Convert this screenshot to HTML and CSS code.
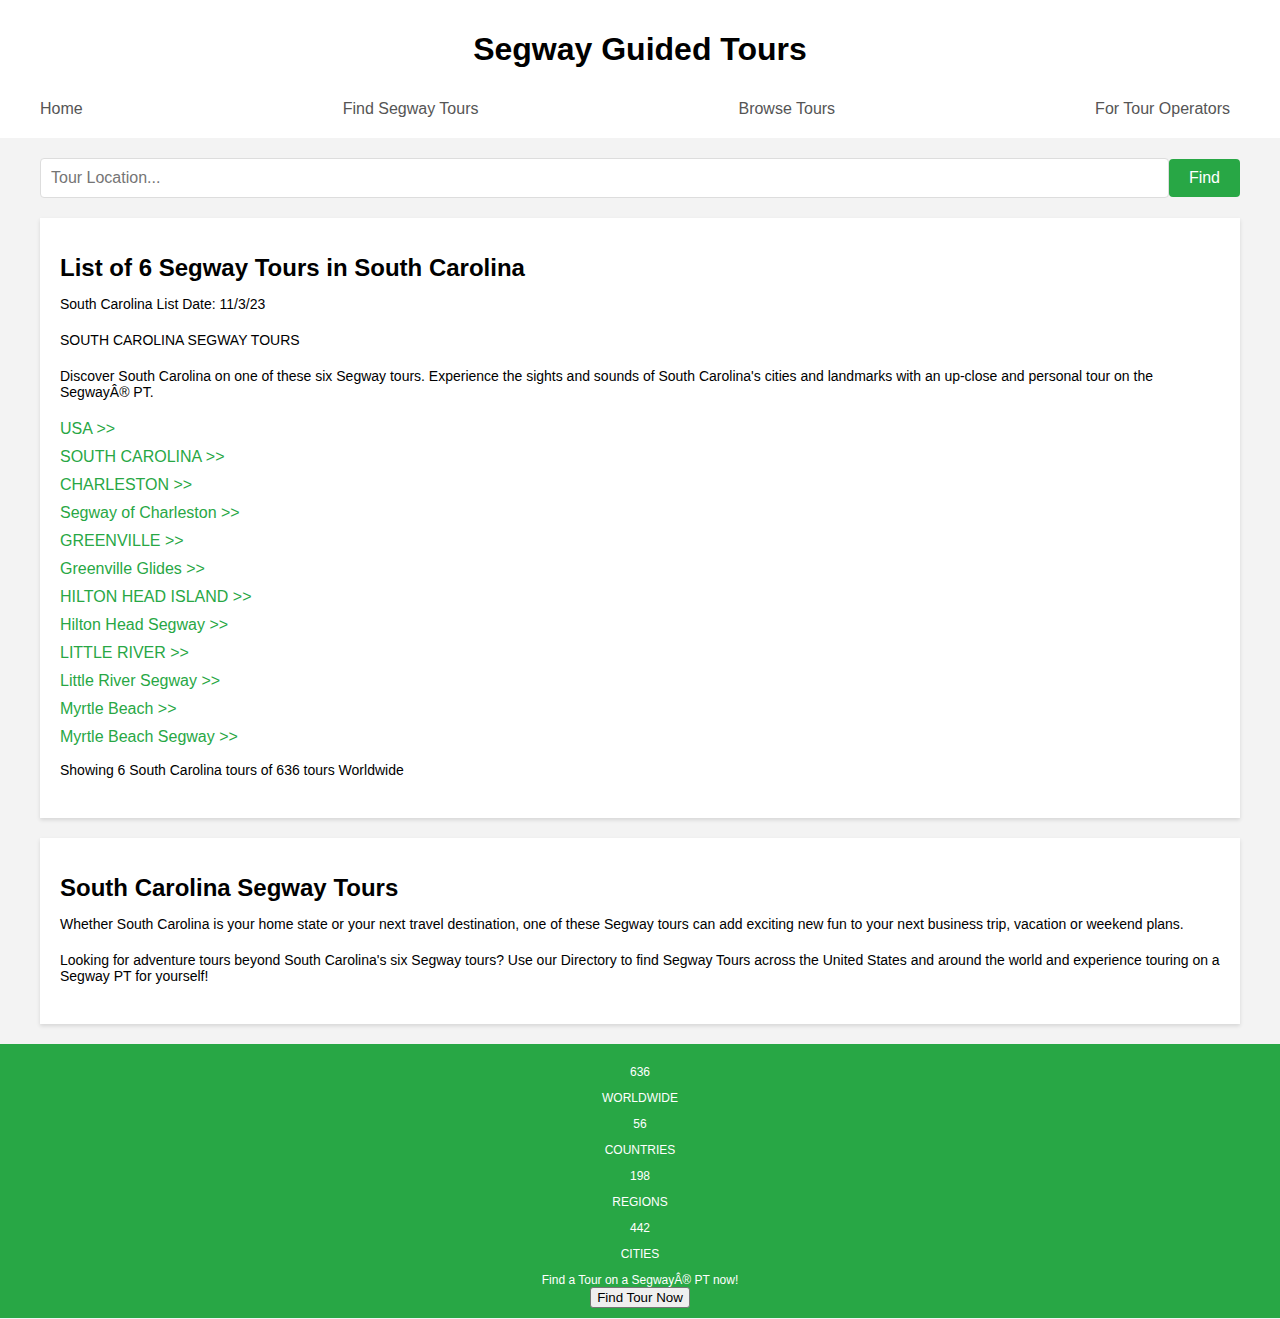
FILE: index.html
```html
<!DOCTYPE html>
<html lang="en">
<head>
<meta charset="utf-8">
<title>Segway Guided Tours</title>
<link rel="stylesheet" href="styles.css">
</head>
<body>
<header class="site-header">
  <h1 class="site-title">Segway Guided Tours</h1>
  <nav class="site-nav">
    <a href="#">Home</a>
    <a href="#">Find Segway Tours</a>
    <a href="#">Browse Tours</a>
    <a href="#">For Tour Operators</a>
  </nav>
</header>
<main class="main">
  <form class="search">
    <input class="search-input" type="text" placeholder="Tour Location...">
    <button class="search-btn" type="button">Find</button>
  </form>
  <section class="card">
    <h2 class="card-title">List of 6 Segway Tours in South Carolina</h2>
    <p class="text">South Carolina List Date: 11/3/23</p>
    <p class="text">SOUTH CAROLINA SEGWAY TOURS</p>
    <p class="text">Discover South Carolina on one of these six Segway tours. Experience the sights and sounds of South Carolina's cities and landmarks with an up-close and personal tour on the SegwayÂ® PT.</p>
    <div class="links">
      <a href="#">USA &gt;&gt;</a>
      <a href="#">SOUTH CAROLINA &gt;&gt;</a>
      <a href="#">CHARLESTON &gt;&gt;</a>
      <a href="#">Segway of Charleston &gt;&gt;</a>
      <a href="#">GREENVILLE &gt;&gt;</a>
      <a href="#">Greenville Glides &gt;&gt;</a>
      <a href="#">HILTON HEAD ISLAND &gt;&gt;</a>
      <a href="#">Hilton Head Segway &gt;&gt;</a>
      <a href="#">LITTLE RIVER &gt;&gt;</a>
      <a href="#">Little River Segway &gt;&gt;</a>
      <a href="#">Myrtle Beach &gt;&gt;</a>
      <a href="#">Myrtle Beach Segway &gt;&gt;</a>
    </div>
    <p class="text">Showing 6 South Carolina tours of 636 tours Worldwide</p>
  </section>
  <section class="card">
    <h2 class="card-title">South Carolina Segway Tours</h2>
    <p class="text">Whether South Carolina is your home state or your next travel destination, one of these Segway tours can add exciting new fun to your next business trip, vacation or weekend plans.</p>
    <p class="text">Looking for adventure tours beyond South Carolina's six Segway tours? Use our Directory to find Segway Tours across the United States and around the world and experience touring on a Segway PT for yourself!</p>
  </section>
</main>
<footer class="footer">
  <p class="stat">636</p>
  <p class="stat">WORLDWIDE</p>
  <p class="stat">56</p>
  <p class="stat">COUNTRIES</p>
  <p class="stat">198</p>
  <p class="stat">REGIONS</p>
  <p class="stat">442</p>
  <p class="stat">CITIES</p>
  <div class="cta">Find a Tour on a SegwayÂ® PT now!</div>
  <button class="cta-btn" type="button">Find Tour Now</button>
</footer>
</body>
</html>
```
FILE: styles.css
```css
* { box-sizing: border-box; }
html, body {
  margin: 0;
  padding: 0;
}
body {
  font-family: "Liberation Sans", Arial, Helvetica, sans-serif;
  background: #f3f3f3;
  color: #000;
}
.site-header {
  background: #fff;
  padding: 10px 0 0;
}
.site-title {
  margin: 21px 0;
  font-size: 32px;
  line-height: 37px;
  text-align: center;
  font-weight: bold;
}
.site-nav {
  display: flex;
  justify-content: space-between;
  padding: 11px 50px 20px 40px;
}
.site-nav a {
  color: #555;
  text-decoration: none;
  font-size: 16px;
  line-height: 18px;
}
.main {
  padding: 20px 40px;
}
.search {
  display: flex;
  align-items: center;
  margin: 0 0 20px;
}
.search-input {
  flex: 1;
  height: 40px;
  padding: 10px;
  border: 1px solid #ddd;
  border-radius: 4px;
  font-family: inherit;
  font-size: 16px;
  background: #fff;
  outline: none;
}
.search-input::placeholder { color: #757575; }
.search-btn {
  height: 38px;
  padding: 0 20px;
  border: none;
  border-radius: 4px;
  background: #28a745;
  color: #fff;
  font-family: inherit;
  font-size: 16px;
}
.card {
  background: #fff;
  padding: 20px;
  margin-bottom: 20px;
  box-shadow: 0 2px 4px rgba(0,0,0,0.12);
}
.card:last-child { margin-bottom: 0; }
.card-title {
  margin: 16px 0 14px;
  font-size: 24px;
  line-height: 28px;
  font-weight: bold;
}
.text {
  margin: 0 0 20px;
  font-size: 14px;
  line-height: 16px;
}
.links {
  display: flex;
  flex-direction: column;
  align-items: flex-start;
  gap: 10px;
  margin-bottom: 16px;
}
.links a {
  color: #28a745;
  text-decoration: none;
  font-size: 16px;
  line-height: 18px;
}
.footer {
  background: #28a745;
  color: #fff;
  text-align: center;
  padding: 9px 0 10px;
  font-size: 12px;
}
.stat {
  margin: 12px 0;
  line-height: 14px;
}
.cta {
  line-height: 14px;
}
.cta-btn {
  font-family: inherit;
  font-size: 13.33px;
  line-height: 17px;
  padding: 1px 6px;
  border: 1px solid #767676;
  border-radius: 3px;
  background: #efefef;
  color: #000;
  vertical-align: top;
}
```
